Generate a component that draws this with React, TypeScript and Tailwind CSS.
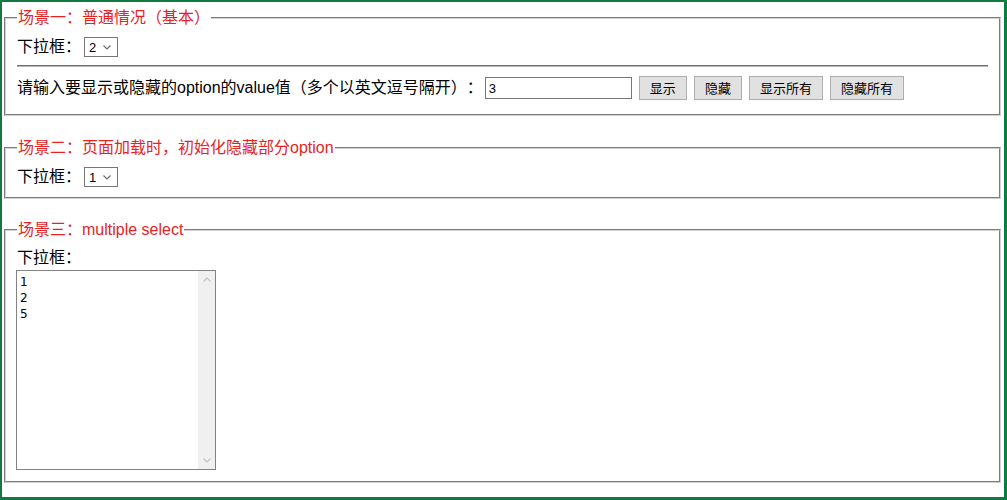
import React from "react";

const FONT =
  "font-['Liberation_Sans','Noto_Sans_CJK_SC','Microsoft_YaHei',sans-serif] [text-spacing-trim:space-all]";

function Chevron({ up = false, color = "#6d6d6d" }: { up?: boolean; color?: string }) {
  return (
    <svg width="8" height="5" viewBox="0 0 8 5" className="block">
      <path
        d={up ? "M0.5 4.5 L4 1 L7.5 4.5" : "M0.5 0.5 L4 4 L7.5 0.5"}
        fill="none"
        stroke={color}
        strokeWidth="1.2"
      />
    </svg>
  );
}

function FakeSelect({ value }: { value: string }) {
  return (
    <div className="relative ml-[3px] flex h-[20px] w-[34px] items-center border border-[#767676] bg-white">
      <span className="pl-[4px] font-['Liberation_Sans',sans-serif] text-[13px] leading-none text-black">
        {value}
      </span>
      <span className="absolute right-[6px] top-[7px]">
        <Chevron />
      </span>
    </div>
  );
}

function Btn({ children }: { children: React.ReactNode }) {
  return (
    <button className="ml-[7px] h-[24px] border border-[#adadad] bg-[#e1e1e1] px-[10px] text-[13px] leading-none text-black">
      {children}
    </button>
  );
}

function Box({
  title,
  className,
  children,
}: {
  title: string;
  className: string;
  children: React.ReactNode;
}) {
  return (
    <fieldset
      className={`ml-[2px] mr-[3px] border-2 border-[#d0d0d0] [border-style:groove] px-[11px] ${className}`}
    >
      <legend className="px-[1px] text-[16px] leading-[22px] text-[#e8231f]">
        {title}
      </legend>
      {children}
    </fieldset>
  );
}

export default function App() {
  return (
    <div
      className={`h-[500px] w-[1007px] overflow-hidden border-b-[3px] border-l-2 border-r-[3px] border-t-2 border-[#107a40] bg-white text-black ${FONT}`}
    >
      {/* 场景一 */}
      <Box title="场景一：普通情况（基本）" className="mt-[5px] pb-[13px] pt-[6px]">
        <div className="flex h-[24px] items-center text-[16px]">
          <span>下拉框：</span>
          <FakeSelect value="2" />
        </div>
        <div className="mt-[6px] border-b border-t border-b-[#b8b8b8] border-t-[#6e6e6e]" />
        <div className="mt-[8px] flex h-[26px] items-center text-[16px]">
          <span className="whitespace-nowrap">
            请输入要显示或隐藏的option的value值（多个以英文逗号隔开）：
          </span>
          <input
            defaultValue="3"
            className="ml-[2px] h-[22px] w-[147px] border border-[#767676] px-[3px] font-['Liberation_Sans',sans-serif] text-[13px] outline-none"
          />
          <Btn>显示</Btn>
          <Btn>隐藏</Btn>
          <Btn>显示所有</Btn>
          <Btn>隐藏所有</Btn>
        </div>
      </Box>

      {/* 场景二 */}
      <Box title="场景二：页面加载时，初始化隐藏部分option" className="mt-[21px] pb-[8px] pt-[6px]">
        <div className="flex h-[24px] items-center text-[16px]">
          <span>下拉框：</span>
          <FakeSelect value="1" />
        </div>
      </Box>

      {/* 场景三 */}
      <Box title="场景三：multiple select" className="mt-[20px] pb-[11px] pt-[6px]">
        <div className="text-[16px] leading-[22px]">下拉框：</div>
        <div className="-ml-[1px] mt-[1px] flex h-[200px] w-[200px] border border-[#828282] bg-white">
          <div className="flex-1 pl-[3px] pt-[3px] font-['DejaVu_Sans',sans-serif] text-[12px] leading-[16px]">
            <div>1</div>
            <div>2</div>
            <div>5</div>
          </div>
          <div className="flex w-[17px] flex-col items-center justify-between bg-[#f0f0f0] py-[6px]">
            <Chevron up color="#c2c2c2" />
            <Chevron color="#c2c2c2" />
          </div>
        </div>
      </Box>
    </div>
  );
}
